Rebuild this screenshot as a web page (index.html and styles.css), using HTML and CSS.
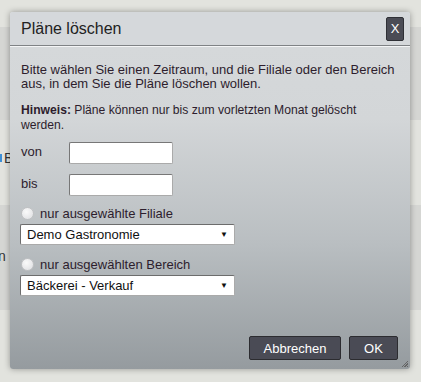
FILE: index.html
```html
<!DOCTYPE html>
<html lang="de">
  <head>
    <meta charset="UTF-8" />
    <meta name="viewport" content="width=device-width, initial-scale=1.0" />
    <title>Pläne löschen</title>
    <link rel="stylesheet" href="styles.css">
  </head>
  <body>
    <div class="page">
      <div class="band light" style="height: 27px"></div>
      <div class="band dark" style="height: 93px"></div>
      <div class="band light" style="height: 85px">
        <span class="peek"><span class="dot"></span>B</span>
      </div>
      <div class="band dark" style="height: 105px">
        <span class="peek peek2">n a</span>
      </div>
      <div class="band light" style="height: 72px"></div>
    </div>

    <div class="dialog">
      <div class="titlebar">
        <span class="title">Pläne löschen</span>
        <button type="button" class="close">X</button>
      </div>
      <div class="content">
        <p class="intro">Bitte wählen Sie einen Zeitraum, und die Filiale oder den Bereich aus, in dem Sie die Pläne löschen wollen.</p>
        <p class="hint"><b>Hinweis:</b> Pläne können nur bis zum vorletzten Monat gelöscht werden.</p>

        <div class="row">
          <label for="von">von</label>
          <input type="text" id="von" name="von" />
        </div>
        <div class="row">
          <label for="bis">bis</label>
          <input type="text" id="bis" name="bis" />
        </div>

        <div class="choice">
          <span class="radio"></span>
          <span>nur ausgewählte Filiale</span>
        </div>
        <div class="select"><span>Demo Gastronomie</span><span class="arrow">&#9660;</span></div>

        <div class="choice">
          <span class="radio"></span>
          <span>nur ausgewählten Bereich</span>
        </div>
        <div class="select"><span>Bäckerei - Verkauf</span><span class="arrow">&#9660;</span></div>
      </div>
      <div class="buttons">
        <button type="button" class="btn wide">Abbrechen</button>
        <button type="button" class="btn">OK</button>
      </div>
      <div class="grip"></div>
    </div>
  </body>
</html>
```

FILE: styles.css
```css
body {
  font-family: "Liberation Sans", Arial, sans-serif;
  margin: 0;
  background-color: #e2e3de;
  width: 421px;
  height: 382px;
  overflow: hidden;
}
.page {
  display: flex;
  flex-direction: column;
}
.band {
  position: relative;
  font-size: 14px;
  color: #333;
}
.light {
  background-color: #e2e3de;
}
.dark {
  background-color: #d5d6d3;
}
.peek {
  display: flex;
  align-items: center;
  gap: 2px;
  padding-top: 30px;
  white-space: nowrap;
}
.peek2 {
  padding-top: 43px;
  margin-left: -2px;
}
.dot {
  width: 2px;
  height: 8px;
  background-color: #3d8fd6;
}
.dialog {
  position: absolute;
  left: 10px;
  top: 12px;
  width: 400px;
  height: 357px;
  border-radius: 3px;
  background: linear-gradient(#d6d9db 0%, #d3d6d8 30%, #b9bec1 65%, #959b9f 100%);
  box-shadow: 0 0 6px rgba(0, 0, 0, 0.35);
  display: flex;
  flex-direction: column;
  color: #2d1d2d;
}
.titlebar {
  height: 33px;
  display: flex;
  align-items: center;
  justify-content: space-between;
  padding: 0 6px 0 11px;
  border-bottom: 1px solid #7f8285;
  box-shadow: 0 1px 0 #f4f5f6;
  background-color: #d5d8db;
  border-radius: 3px 3px 0 0;
}
.title {
  font-size: 16px;
  color: #222;
  padding-top: 1px;
}
.close {
  width: 18px;
  height: 24px;
  padding: 0;
  border: 1px solid #2f3036;
  border-radius: 2px;
  background-color: #4b4c55;
  color: #fff;
  font-family: inherit;
  font-size: 13px;
  cursor: pointer;
}
.content {
  flex: 1;
  width: 377px;
  padding: 17px 0 0 11px;
  font-size: 13px;
}
.intro {
  margin: 0 0 12px 0;
  line-height: 14px;
}
.hint {
  margin: 0 0 9px 0;
  font-size: 12.15px;
  line-height: 15px;
}
.row {
  display: flex;
  align-items: center;
  margin-bottom: 10px;
}
.row label {
  width: 48px;
  margin-top: -3px;
}
.row input {
  width: 104px;
  height: 22px;
  box-sizing: border-box;
  border: 1px solid #aaa;
  border-top-color: #777;
  border-left-color: #777;
  border-radius: 2px;
  background-color: #fff;
  margin: 0;
}
.choice {
  display: flex;
  align-items: center;
  gap: 6px;
  margin: 12px 0 4px 0;
  height: 14px;
}
.row + .choice {
  margin-top: 3px;
}
.radio {
  width: 11px;
  height: 11px;
  border-radius: 50%;
  border: 1px solid #c0c2c4;
  background: radial-gradient(circle at 40% 35%, #fafafa, #dcdde0);
}
.select {
  width: 215px;
  height: 21px;
  box-sizing: border-box;
  display: flex;
  align-items: center;
  justify-content: space-between;
  padding: 0 6px 0 6px;
  margin-left: -1px;
  border: 1px solid #aaa;
  border-top-color: #6c6c6c;
  border-left-color: #6c6c6c;
  border-radius: 2px;
  background-color: #fff;
  color: #111;
}
.arrow {
  font-size: 8px;
}
.buttons {
  display: flex;
  justify-content: flex-end;
  gap: 8px;
  padding: 0 12px 9px 0;
}
.btn {
  height: 24px;
  width: 49px;
  padding: 0;
  border: 1px solid #2c2c30;
  border-radius: 2px;
  background-color: #4a4b55;
  color: #fff;
  font-family: inherit;
  font-size: 13px;
  cursor: pointer;
}
.btn.wide {
  width: 92px;
}
.btn:hover {
  background-color: #5a5b66;
}
.grip {
  position: absolute;
  right: 2px;
  bottom: 2px;
  width: 7px;
  height: 7px;
  background: repeating-linear-gradient(135deg, transparent 0 1px, #666 1px 2px);
  clip-path: polygon(100% 0, 100% 100%, 0 100%);
}
```
